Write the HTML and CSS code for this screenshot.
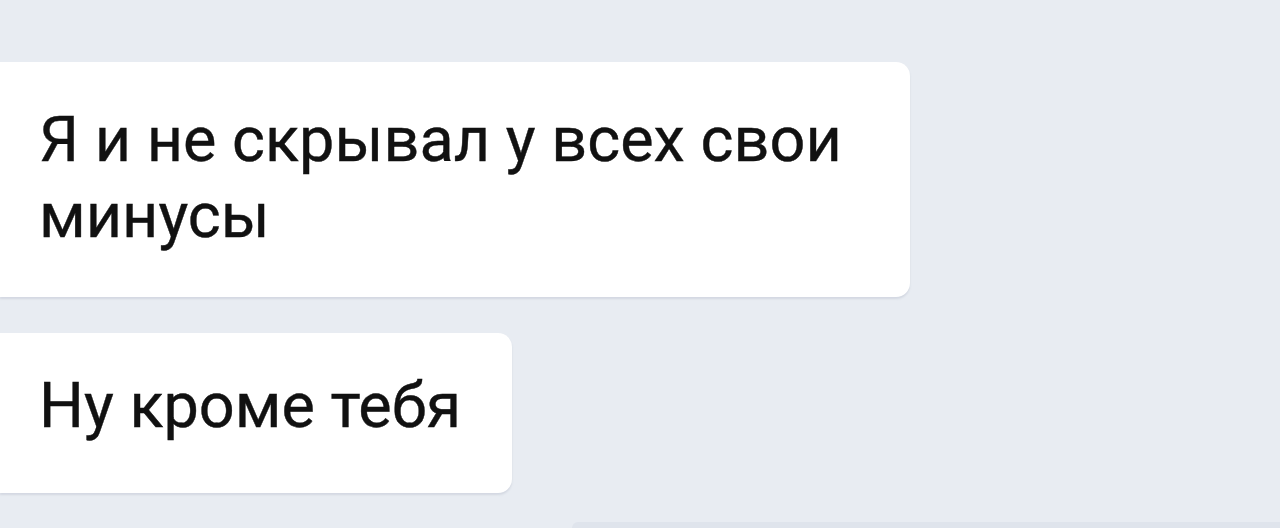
FILE: index.html
```html
<!DOCTYPE html>
<html lang="ru">
<head>
<meta charset="utf-8">
<link rel="stylesheet" href="styles.css">
</head>
<body>
<div class="chat">
  <div class="bubble b1">Я и не скрывал у всех свои<br>минусы</div>
  <div class="bubble b2">Ну кроме тебя</div>
  <div class="bubble next"></div>
</div>
</body>
</html>
```
FILE: styles.css
```css
html, body {
  margin: 0;
  padding: 0;
  height: 100%;
  overflow: hidden;
}
body {
  background: #e8ecf2;
  font-family: Roboto, "Noto Sans", sans-serif;
  color: #111111;
}
.chat {
  display: flex;
  flex-direction: column;
  align-items: flex-start;
  padding-top: 62px;
}
.bubble {
  background: #ffffff;
  border-radius: 0 14px 14px 0;
  box-shadow: 0 2px 2px rgba(150, 160, 180, 0.25);
  font-size: 63px;
  line-height: 76px;
  box-sizing: border-box;
  padding-left: 39px;
  -webkit-text-stroke: 0.4px #111111;
}
.b1 {
  width: 910px;
  height: 235px;
  padding-top: 40px;
}
.b2 {
  margin-top: 36px;
  width: 512px;
  height: 160px;
  padding-top: 35px;
}
.next {
  margin-top: 29px;
  margin-left: 572px;
  width: 720px;
  height: 6px;
  background: #dfe4ec;
  border-radius: 14px 0 0 0;
  box-shadow: none;
}
```
